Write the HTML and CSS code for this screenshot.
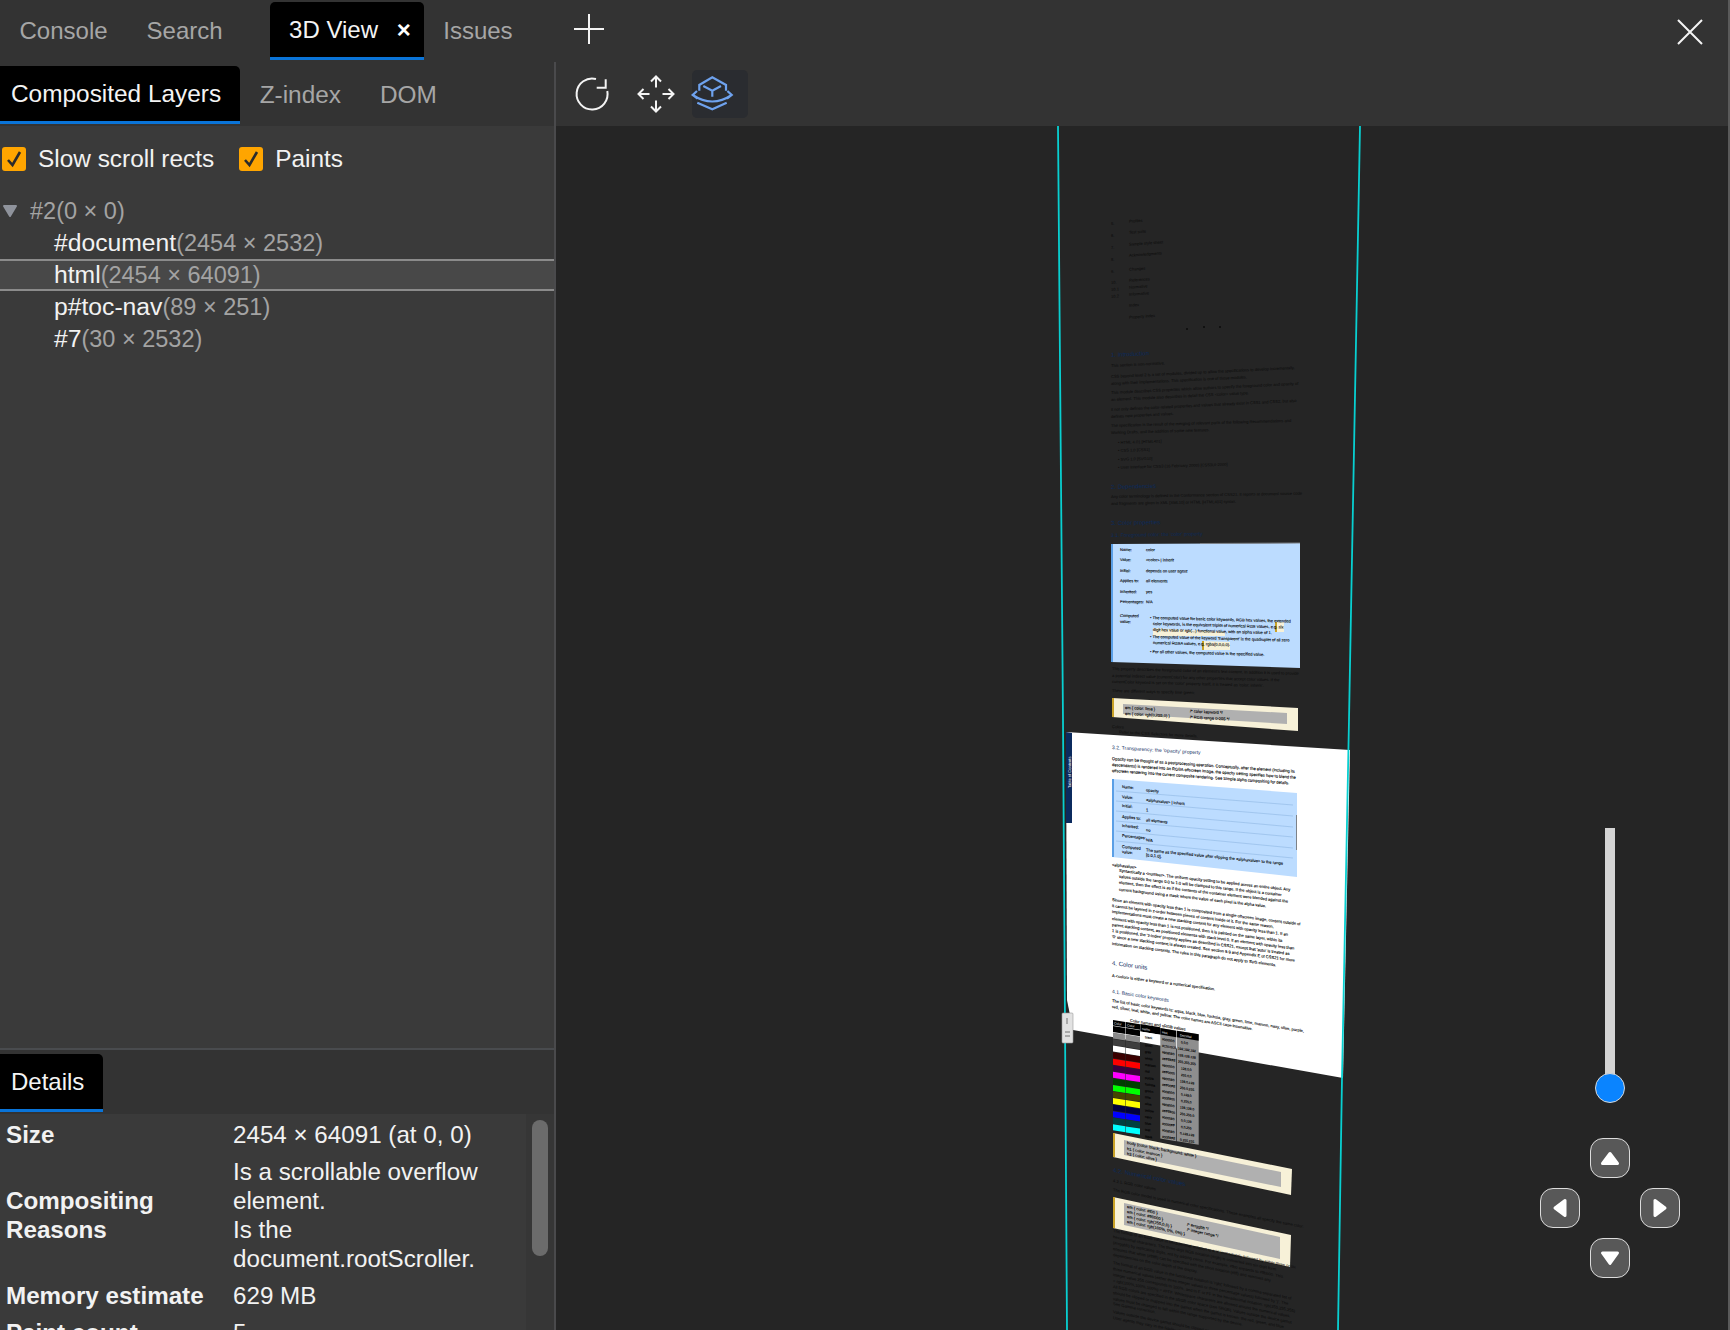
FILE: index.html

```html
<!DOCTYPE html>
<html lang="en">
<head>
  <meta charset="UTF-8">
  <title>3D View</title>
  <link rel="stylesheet" href="styles.css">
</head>
<body>
  <div class="tabbar">
    <div class="tab">Console</div>
    <div class="tab">Search</div>
    <div class="tab tab-active tab-3d">3D View <span class="tab-x">&times;</span></div>
    <div class="tab">Issues</div>
    <svg class="plus" width="32" height="32" viewBox="0 0 32 32"><path d="M16 1V31M1 16H31"/></svg>
    <svg class="close" width="28" height="28" viewBox="0 0 28 28"><path d="M2 2L26 26M26 2L2 26"/></svg>
  </div>

  <div class="main">
    <div class="side">
      <div class="subtabs">
        <div class="tab tab-active tab-first">Composited Layers</div>
        <div class="tab">Z-index</div>
        <div class="tab">DOM</div>
      </div>

      <div class="checks">
        <label class="check"><span class="box"><svg width="24" height="24" viewBox="0 0 24 24"><path d="M6 13L10.5 18L18 5"/></svg></span>Slow scroll rects</label>
        <label class="check"><span class="box"><svg width="24" height="24" viewBox="0 0 24 24"><path d="M6 13L10.5 18L18 5"/></svg></span>Paints</label>
      </div>

      <div class="tree">
        <div class="row row-root">
          <svg class="caret" width="18" height="14" viewBox="0 0 18 14"><path d="M3 2H15L9 12Z"/></svg>
          <span class="dim">#2(0 &times; 0)</span>
        </div>
        <div class="row row-child">#document<span class="dim">(2454 &times; 2532)</span></div>
        <div class="row row-child row-selected">html<span class="dim">(2454 &times; 64091)</span></div>
        <div class="row row-child">p#toc-nav<span class="dim">(89 &times; 251)</span></div>
        <div class="row row-child">#7<span class="dim">(30 &times; 2532)</span></div>
      </div>

      <div class="details-tabs">
        <div class="tab tab-active tab-first">Details</div>
      </div>
      <div class="details">
        <table class="info">
          <tr><th>Size</th><td>2454 &times; 64091 (at 0, 0)</td></tr>
          <tr>
            <th>Compositing Reasons</th>
            <td><div>Is a scrollable overflow element.</div><div>Is the document.rootScroller.</div></td>
          </tr>
          <tr><th>Memory estimate</th><td>629 MB</td></tr>
          <tr><th>Paint count</th><td>5</td></tr>
        </table>
        <div class="scroll"><div class="thumb"></div></div>
      </div>
    </div>

    <div class="view">
      <div class="toolbar">
        <svg class="tool" width="40" height="40" viewBox="0 0 40 40"><path d="M24 5A15.5 15.5 0 1 0 35.3 17M33.7 5.3V13.7H24.7"/></svg>
        <svg class="tool tool-move" width="40" height="40" viewBox="0 0 40 40"><path d="M20 2.5V13.5M15 7.5L20 2.5L25 7.5M20 26.5V37.5M15 32.5L20 37.5L25 32.5M2.5 20H13.5M7.5 15L2.5 20L7.5 25M26.5 20H37.5M32.5 15L37.5 20L32.5 25"/></svg>
        <span class="tool-on">
          <svg class="tool tool-blue" width="44" height="44" viewBox="0 0 44 44"><path d="M9.3 18.7V13L22.3 5.3L36 13V18.7M13.3 14L22.3 18.7L31 14M22.3 18.7V24.7M2.7 23Q22.3 36 41.7 23M7 19L2.7 23L7.5 26.5M37.4 19L41.7 23L37 26.5M7.3 30.7L22.3 37.3L36.7 30.7"/></svg>
        </span>
      </div>

      <div class="canvas">
        <svg class="scene" width="1172" height="1204" viewBox="556 126 1172 1204">
          <!-- contents -->
          <g class="mini dark" transform="translate(1111 0) skewY(-4)">
            <text y="225">5.</text><text x="18" y="224">Profiles</text>
            <text y="237">6.</text><text x="18" y="235">Test suite</text>
            <text y="249">7.</text><text x="18" y="247">Sample style sheet</text>
            <text y="261">8.</text><text x="18" y="258">Acknowledgments</text>
            <text y="273">9.</text><text x="18" y="272">Changes</text>
            <text y="284">10.</text><text x="18" y="283">References</text>
            <text y="291">10.1</text><text x="18" y="290">Normative</text>
            <text y="298">10.2</text><text x="18" y="297">Informative</text>
            <text x="18" y="308">Index</text>
            <text x="18" y="320">Property index</text>
          </g>
          <circle class="dot" cx="1187" cy="329" r="1"/>
          <circle class="dot" cx="1204" cy="327" r="1"/>
          <circle class="dot" cx="1220" cy="327" r="1"/>

          <!-- intro -->
          <g class="mini dark" transform="translate(1111 0) skewY(-2.8)">
            <text class="head" y="357">1. Introduction</text>
            <text y="367">This section is non-normative.</text>
            <text y="378">CSS beyond level 2 is a set of modules, divided up to allow the specifications to develop incrementally,</text>
            <text y="385">along with their implementations. This specification is one of those modules.</text>
            <text y="394">This module describes CSS properties which allow authors to specify the foreground color and opacity of</text>
            <text y="401">an element. This module also describes in detail the CSS &lt;color&gt; value type.</text>
            <text y="411">It not only defines the color-related properties and values that already exist in CSS1 and CSS2, but also</text>
            <text y="418">defines new properties and values.</text>
          </g>
          <g class="mini dark" transform="translate(1111 0) skewY(-1.6)">
            <text y="427">The specification is the result of the merging of relevant parts of the following Recommendations and</text>
            <text y="434">Working Drafts, and the addition of some new features.</text>
            <text x="7" y="444">&#8226; HTML 4.01 [HTML401]</text>
            <text x="7" y="452">&#8226; CSS 1.0 [CSS1]</text>
            <text x="7" y="461">&#8226; SVG 1.0 [SVG10]</text>
            <text x="7" y="469">&#8226; User Interface for CSS3 (16 February 2000) [CSS3UI-2000]</text>
            <text class="head" y="489">2. Dependencies</text>
          </g>
          <g class="mini dark" transform="translate(1111 0) skewY(-1)">
            <text y="498">Any color terminology is defined in the Conformance section of CSS21. It reports at document source code</text>
            <text y="505">and fragments are given in XML [XML10] or HTML [HTML401] syntax.</text>
            <text class="head" y="525">3. Color properties</text>
            <text class="lnk" y="537">3.1. Foreground color: the 'color' property</text>
          </g>

          <!-- color property box -->
          <polygon class="blue" points="1111,544 1300,543 1300,668 1111,662"/>
          <polygon class="stripe" points="1111,544 1113,544 1113,662 1111,662"/>
          <path class="shade" d="M1200 543.5L1300 543"/>
          <g class="mini black" transform="translate(1111 0) skewY(0.5)">
            <text x="9" y="551">Name:</text><text x="35" y="551">color</text>
            <text x="9" y="561">Value:</text><text x="35" y="561">&lt;color&gt; | inherit</text>
            <text x="9" y="572">Initial:</text><text x="35" y="572">depends on user agent</text>
            <text x="9" y="582">Applies to:</text><text x="35" y="582">all elements</text>
            <text x="9" y="593">Inherited:</text><text x="35" y="593">yes</text>
            <text x="9" y="603">Percentages:</text><text x="35" y="603">N/A</text>
            <text x="9" y="617">Computed</text><text x="9" y="623">value:</text>
          </g>
          <polygon class="cream" points="1275,622 1284,622 1284,632 1275,632"/>
          <polygon class="gold" points="1275,622 1277,622 1277,632 1275,632"/>
          <polygon class="cream" points="1153,628 1225,632 1225,636 1153,636"/>
          <polygon class="cream" points="1202,641 1230,642 1230,650 1202,650"/>
          <polygon class="gold" points="1202,641 1204,641 1204,650 1202,650"/>
          <g class="mini black" transform="translate(1111 0) skewY(1.5)">
            <text x="39" y="618">&#8226; The computed value for basic color keywords, RGB hex values, the extended</text>
            <text x="42" y="624">color keywords, is the equivalent triplet of numerical RGB values, e.g. six</text>
            <text x="42" y="630">digit hex value or rgb(...) functional value, with an alpha value of 1.</text>
            <text x="39" y="637">&#8226; The computed value of the keyword 'transparent' is the quadruplet of all zero</text>
            <text x="42" y="643">numerical RGBA values, e.g. rgba(0,0,0,0).</text>
            <text x="39" y="652">&#8226; For all other values, the computed value is the specified value.</text>
          </g>

          <g class="mini dark" transform="translate(1112 0) skewY(1.5)">
            <text y="670">This property describes the foreground color of an element's text content. In addition it is used to provide</text>
            <text y="677">a potential indirect value (currentColor) for any other properties that accept color values. If the</text>
            <text y="683">currentColor keyword is set on the 'color' property itself, it is treated as 'color: inherit'.</text>
            <text y="692">There are different ways to specify lime green:</text>
          </g>

          <polygon class="cream" points="1112,698 1298,708 1298,731 1112,717"/>
          <polygon class="gold" points="1112,698 1114,698 1114,717 1112,717"/>
          <polygon class="code" points="1123,704 1287,713 1287,724 1123,714"/>
          <g class="mini black" transform="translate(1125 0) skewY(3)">
            <text y="709">em { color: lime }</text><text x="65" y="709">/* color keyword */</text>
            <text y="715">em { color: rgb(0,255,0) }</text><text x="65" y="715">/* RGB range 0-255 */</text>
          </g>
          <g class="mini dark" transform="translate(1112 0) skewY(3)">
            <text y="728">Colors</text>
            <text x="7" y="733">Refer to the CSS Selectors for more details.</text>
          </g>

          <!-- layer that is lifted off the page -->
          <polygon class="sheet" points="1066,732 1350,750 1343,1078 1073,1030 1067,1000"/>
          <polygon class="navy" points="1066,732 1072,733 1072,823 1066,823"/>
          <text class="mini white" transform="translate(1070.5 788) rotate(-90)">Table of Contents</text>

          <text class="mini lnk" transform="translate(1112 749) skewY(3.4)">3.2. Transparency: the 'opacity' property</text>
          <g class="mini black" transform="translate(1112 0) skewY(4)">
            <text y="760">Opacity can be thought of as a postprocessing operation. Conceptually, after the element (including its</text>
            <text y="766">descendants) is rendered into an RGBA offscreen image, the opacity setting specifies how to blend the</text>
            <text y="772">offscreen rendering into the current composite rendering. See Simple alpha compositing for details.</text>
          </g>

          <polygon class="blue" points="1112,779 1297,793 1297,877 1112,857"/>
          <polygon class="stripe" points="1112,779 1114,779 1114,857 1112,857"/>
          <path class="rule" d="M1116 791L1293 805M1116 801L1293 816M1116 811L1293 827M1116 821L1293 837M1116 831L1293 848M1116 841L1293 858"/>
          <path class="shade" d="M1296.5 815V850"/>
          <g class="mini black" transform="translate(1112 0) skewY(5.6)">
            <text x="10" y="787">Name:</text><text x="34" y="788">opacity</text>
            <text x="10" y="797">Value:</text><text x="34" y="798">&lt;alphavalue&gt; | inherit</text>
            <text x="10" y="806">Initial:</text><text x="34" y="808">1</text>
            <text x="10" y="817">Applies to:</text><text x="34" y="818">all elements</text>
            <text x="10" y="826">Inherited:</text><text x="34" y="828">no</text>
            <text x="10" y="836">Percentages:</text><text x="34" y="838">N/A</text>
            <text x="10" y="847">Computed</text><text x="10" y="852">value:</text>
            <text x="34" y="848">The same as the specified value after clipping the &lt;alphavalue&gt; to the range</text>
            <text x="34" y="853">[0.0,1.0].</text>
          </g>

          <g class="mini black" transform="translate(1112 0) skewY(6.4)">
            <text y="866">&lt;alphavalue&gt;</text>
            <text x="7" y="871">Syntactically a &lt;number&gt;. The uniform opacity setting to be applied across an entire object. Any</text>
            <text x="7" y="877">values outside the range 0.0 to 1.0 will be clamped to this range. If the object is a container</text>
            <text x="7" y="883">element, then the effect is as if the contents of the container element were blended against the</text>
            <text x="7" y="890">current background using a mask where the value of each pixel is the alpha value.</text>
          </g>
          <g class="mini black" transform="translate(1112 0) skewY(7.4)">
            <text y="901">Since an element with opacity less than 1 is composited from a single offscreen image, content outside of</text>
            <text y="907">it cannot be layered in z-order between pieces of content inside of it. For the same reason,</text>
            <text y="913">implementations must create a new stacking context for any element with opacity less than 1. If an</text>
            <text y="920">element with opacity less than 1 is not positioned, then it is painted on the same layer, within its</text>
            <text y="926">parent stacking context, as positioned elements with stack level 0. If an element with opacity less than</text>
            <text y="932">1 is positioned, the 'z-index' property applies as described in CSS21, except that 'auto' is treated as</text>
            <text y="938">'0' since a new stacking context is always created. See section 9.9 and Appendix E of CSS21 for more</text>
            <text y="945">information on stacking contexts. The rules in this paragraph do not apply to SVG elements.</text>
            <text class="head" y="965">4. Color units</text>
            <text y="977">A &lt;color&gt; is either a keyword or a numerical specification.</text>
          </g>
          <g class="mini black" transform="translate(1112 0) skewY(9)">
            <text class="lnk" y="993">4.1. Basic color keywords</text>
            <text y="1002">The list of basic color keywords is: aqua, black, blue, fuchsia, gray, green, lime, maroon, navy, olive, purple,</text>
            <text y="1008">red, silver, teal, white, and yellow. The color names are ASCII case-insensitive.</text>
            <text x="18" y="1019">Color names and sRGB values</text>
          </g>

          <!-- outline of the page -->
          <path class="edge" d="M1058 126L1063 720L1067 1330"/>
          <path class="edge" d="M1360 126L1349 720L1342 1078L1338 1330"/>

          <!-- scrollbar handle -->
          <rect class="grip" x="1062" y="1013" width="11" height="30" rx="1"/>
          <path class="grip-mark" d="M1067 1018V1024M1065 1032H1070M1065 1036H1070"/>

          <!-- basic colors -->
          <g transform="translate(1113 1019) skewY(9.1)">
            <defs>
              <g id="swatches">
                <rect y="7" width="12.5" height="6" fill="#000"/>
                <rect y="13.5" width="12.5" height="6" fill="#8a8a8a"/>
                <rect y="20" width="12.5" height="6" fill="#3d3d3d"/>
                <rect y="26.6" width="12.5" height="6" fill="#fff"/>
                <rect y="33.2" width="12.5" height="6" fill="#3a0000"/>
                <rect y="39.7" width="12.5" height="6" fill="#f00"/>
                <rect y="46.3" width="12.5" height="6" fill="#3a003f"/>
                <rect y="52.8" width="12.5" height="6" fill="#f0f"/>
                <rect y="59.4" width="12.5" height="6" fill="#003f00"/>
                <rect y="66" width="12.5" height="6" fill="#0f0"/>
                <rect y="72.5" width="12.5" height="6" fill="#444400"/>
                <rect y="79" width="12.5" height="6" fill="#ff0"/>
                <rect y="85.6" width="12.5" height="6" fill="#00003f"/>
                <rect y="92.2" width="12.5" height="6" fill="#00f"/>
                <rect y="98.7" width="12.5" height="6" fill="#004040"/>
                <rect y="105.3" width="12.5" height="6" fill="#0ff"/>
              </g>
            </defs>
            <rect x="0" y="1" width="12.5" height="5.5" fill="#000"/>
            <rect x="13" y="1" width="14" height="5.5" fill="#000"/>
            <use href="#swatches"/>
            <use href="#swatches" transform="translate(13 0) scale(1.12 1)"/>
            <rect x="27.3" y="0.6" width="20" height="7.6" fill="#000"/>
            <rect x="27.3" y="8.2" width="20" height="9" fill="#fff"/>
            <rect x="47.3" y="1.5" width="16" height="110.5" fill="#8e8e8e"/>
            <rect x="64" y="1.5" width="21.7" height="110.5" fill="#8e8e8e"/>
            <rect x="47.3" y="1.5" width="16" height="6.5" fill="#000"/>
            <rect x="64" y="1.5" width="21.7" height="6.5" fill="#000"/>
            <g class="tiny white">
              <text x="1" y="5">Color</text><text x="14" y="5">Color</text>
              <text x="29" y="6">name</text><text x="49" y="6.5">Hex</text><text x="67" y="6.5">Decimal</text>
            </g>
            <g class="tiny black">
              <text x="32" y="14">black</text><text x="49" y="13.5">#000000</text><text x="68" y="13.5">0,0,0</text>
              <text x="32" y="22">silver</text><text x="49" y="20">#C0C0C0</text><text x="65" y="20">192,192,192</text>
              <text x="32" y="28.5">gray</text><text x="49" y="26.5">#808080</text><text x="65" y="26.5">128,128,128</text>
              <text x="32" y="35">white</text><text x="49" y="33">#FFFFFF</text><text x="65" y="33">255,255,255</text>
              <text x="32" y="41.5">maroon</text><text x="49" y="39.5">#800000</text><text x="68" y="39.5">128,0,0</text>
              <text x="32" y="48">red</text><text x="49" y="46">#FF0000</text><text x="68" y="46">255,0,0</text>
              <text x="32" y="54.5">purple</text><text x="49" y="52.5">#800080</text><text x="67" y="52.5">128,0,128</text>
              <text x="32" y="61">fuchsia</text><text x="49" y="59">#FF00FF</text><text x="67" y="59">255,0,255</text>
              <text x="32" y="67.5">green</text><text x="49" y="65.5">#008000</text><text x="68" y="65.5">0,128,0</text>
              <text x="32" y="74">lime</text><text x="49" y="72">#00FF00</text><text x="68" y="72">0,255,0</text>
              <text x="32" y="80.5">olive</text><text x="49" y="78.5">#808000</text><text x="67" y="78.5">128,128,0</text>
              <text x="32" y="87">yellow</text><text x="49" y="85">#FFFF00</text><text x="67" y="85">255,255,0</text>
              <text x="32" y="93.5">navy</text><text x="49" y="91.5">#000080</text><text x="68" y="91.5">0,0,128</text>
              <text x="32" y="100">blue</text><text x="49" y="98">#0000FF</text><text x="68" y="98">0,0,255</text>
              <text x="32" y="106.5">teal</text><text x="49" y="104.5">#008080</text><text x="67" y="104.5">0,128,128</text>
              <text x="32" y="113">aqua</text><text x="49" y="111">#00FFFF</text><text x="67" y="111">0,255,255</text>
            </g>
          </g>

          <polygon class="cream" points="1113,1133 1292,1169 1291,1195 1113,1157"/>
          <polygon class="gold" points="1113,1133 1115,1133 1115,1157 1113,1157"/>
          <polygon class="code" points="1124,1140 1281,1172 1281,1187 1124,1155"/>
          <g class="mini black" transform="translate(1127 0) skewY(11)">
            <text y="1144">body {color: black; background: white }</text>
            <text y="1150">h1 { color: maroon }</text>
            <text y="1155">h2 { color: olive }</text>
          </g>

          <g class="mini dark" transform="translate(1113 0) skewY(11)">
            <text class="head" y="1172">4.2. Numerical color values</text>
            <text y="1182">4.2.1. RGB color values</text>
            <text y="1191">The RGB color model is used in numerical color specifications. These examples all specify the same color:</text>
          </g>

          <polygon class="cream" points="1113,1197 1291,1235 1290,1267 1113,1228"/>
          <polygon class="gold" points="1113,1197 1115,1197 1115,1228 1113,1228"/>
          <polygon class="code" points="1124,1203 1280,1237 1280,1259 1124,1225"/>
          <g class="mini black" transform="translate(1127 0) skewY(12)">
            <text y="1208">em { color: #f00 }</text>
            <text y="1213">em { color: #ff0000 }</text><text x="60" y="1213">/* #rrggbb */</text>
            <text y="1218">em { color: rgb(255,0,0) }</text><text x="60" y="1218">/* integer range */</text>
            <text y="1223">em { color: rgb(100%, 0%, 0%) }</text>
          </g>

          <g class="mini dark" transform="translate(1113 0) skewY(11.3)">
            <text y="1232">The format of an RGB value in hexadecimal notation is a '#' immediately followed by either three or six</text>
            <text y="1238">hexadecimal characters. The three-digit RGB notation (#rgb) is converted into six-digit form</text>
            <text y="1244">(#rrggbb) by replicating digits, not by adding zeros. For example, #fb0 expands to #ffbb00. This</text>
            <text y="1250">ensures that white (#ffffff) can be specified with the short notation (#fff) and removes any</text>
            <text y="1256">dependencies on the color depth of the display.</text>
            <text y="1264">The format of an RGB value in the functional notation is 'rgb(' followed by a comma-separated list of</text>
            <text y="1270">three numerical values (either three integer values or three percentage values) followed by ')'. The</text>
            <text y="1276">integer value 255 corresponds to 100%, and to F or FF in the hexadecimal notation: rgb(255,255,255)</text>
            <text y="1282">= rgb(100%,100%,100%) = #FFF. Whitespace characters are allowed around the numerical values.</text>
            <text y="1288">All RGB colors are specified in the sRGB color space (see SRGB). Values outside the device gamut</text>
            <text y="1294">should be clipped or mapped into the gamut when the gamut is known: the red, green, and blue</text>
            <text y="1300">values must be changed to fall within the range supported by the device.</text>
            <text y="1305">See Gamma correction.</text>
            <text y="1313">Values outside the device gamut should be clipped or mapped.</text>
            <text y="1319">User agents may vary in the fidelity of these colors.</text>
          </g>
        </svg>

        <div class="zoom">
          <div class="zoom-track"></div>
          <div class="zoom-knob"></div>
        </div>
        <div class="pad">
          <button class="pad-btn pad-up"><svg width="22" height="16" viewBox="0 0 22 16"><path d="M11 3.5L18.5 13.5H3.5Z"/></svg></button>
          <button class="pad-btn pad-left"><svg width="16" height="22" viewBox="0 0 16 22"><path d="M3 11L13 3.5V18.5Z"/></svg></button>
          <button class="pad-btn pad-right"><svg width="16" height="22" viewBox="0 0 16 22"><path d="M13 11L3 3.5V18.5Z"/></svg></button>
          <button class="pad-btn pad-down"><svg width="22" height="16" viewBox="0 0 22 16"><path d="M11 13.5L18.5 3H3.5Z"/></svg></button>
        </div>
      </div>
    </div>
  </div>
</body>
</html>
```

FILE: styles.css

```css
* { box-sizing: border-box; }
html, body { margin: 0; height: 100%; }
body { width: 1730px; height: 1330px; overflow: hidden; display: flex; flex-direction: column; background: #333; color: #f2f2f2; font: 24px "Liberation Sans", Arial, sans-serif; border-right: 2px solid #5a5a5a; }

/* tabs */
.tabbar { height: 62px; padding-top: 2px; display: flex; align-items: stretch; background: #333; flex: none; }
.tab { padding: 0 19.5px; height: 58px; display: flex; align-items: center; color: #a6a6a6; white-space: pre; }
.tab-active { background: #000; color: #f4f4f4; border-bottom: 3px solid #0a74d8; border-radius: 5px 5px 0 0; }
.tab-3d { margin-left: 28px; padding: 0 13px 0 19px; }
.tab-x { margin-left: 12px; font-weight: bold; color: #fff; }
.tab-first { padding: 0 19px 0 11px; border-top-left-radius: 0; }
.plus { margin: 11px 0 0 41px; }
.plus path, .close path { fill: none; stroke: #f4f4f4; stroke-width: 2; }
.close { margin: 16px 24px 0 auto; }

/* left panel */
.main { flex: 1; display: flex; min-height: 0; }
.side { width: 556px; flex: none; display: flex; flex-direction: column; background: #3a3a3a; border-right: 2px solid #4a4a4c; }
.subtabs { height: 64px; padding-top: 4px; flex: none; display: flex; background: #333; font-size: 24.4px; }
.checks { display: flex; gap: 25px; padding: 19px 0 0 2px; font-size: 24.4px; }
.check { display: flex; align-items: center; gap: 12px; color: #f2f2f2; }
.box { width: 24px; height: 24px; background: #ffa500; border-radius: 3px; display: block; }
.box svg { display: block; }
.box path { fill: none; stroke: #2b2b2b; stroke-width: 2.6; }
.tree { flex: 1; padding-top: 22px; }
.row { height: 32px; display: flex; align-items: center; white-space: pre; font-size: 24.7px; }
.row-root { padding-left: 1px; color: #a6a6a6; }
.row-child { padding-left: 54px; }
.row-selected { background: #484848; border-top: 2px solid #8b8b8b; border-bottom: 2px solid #8b8b8b; }
.caret { margin-right: 11px; }
.caret path { fill: #8f939c; stroke: #8f939c; stroke-width: 2; stroke-linejoin: round; }
.dim { color: #a3a3a3; font-size: 23.5px; }

/* details */
.details-tabs { height: 66px; padding-top: 4px; flex: none; display: flex; background: #333; border-top: 2px solid #494b4e; }
.details { height: 216px; flex: none; display: flex; overflow: hidden; }
.info { width: 526px; flex: none; margin-top: 2px; border-collapse: collapse; align-self: flex-start; font-size: 24.2px; }
.info th, .info td { padding: 4px 6px; line-height: 29px; font-weight: normal; text-align: left; }
.info th { width: 227px; font-weight: bold; font-size: 24.2px; color: #f2f2f2; }
.info td { padding-right: 30px; }
.scroll { flex: 1; padding: 6px 6px; background: #363636; }
.thumb { width: 16px; height: 136px; border-radius: 8px; background: #6b6b6b; }

/* right side */
.view { flex: 1; display: flex; flex-direction: column; min-width: 0; }
.toolbar { height: 64px; flex: none; padding-left: 16px; display: flex; align-items: center; background: #333; }
.tool { display: block; }
.tool path { fill: none; stroke: #f4f4f4; stroke-width: 2; }
.tool-move { margin-left: 24px; }
.tool-on { width: 56px; height: 48px; margin: 0 0 0 16px; display: flex; align-items: center; background: #2a2c30; border-radius: 5px; }
.tool-blue { flex: none; margin-left: -2px; }
.tool-blue path { stroke: #6ea2ee; stroke-width: 2.2; }

/* 3d scene */
.canvas { flex: 1; position: relative; background: #252525; overflow: hidden; }
.scene { display: block; }
.edge { fill: none; stroke: #08cfd0; stroke-width: 1.8; }
.mini text, text.mini { font-family: "Liberation Sans", Arial, sans-serif; font-size: 4.05px; text-rendering: geometricPrecision; }
.tiny text { font-family: "Liberation Sans", Arial, sans-serif; font-size: 3.2px; text-rendering: geometricPrecision; }
.dark text { fill: #0b0b0b; }
.black text { fill: #000; stroke: #000; stroke-width: 0.1; }
.white text, text.white { fill: #fff; }
.mini text.head { font-size: 6px; fill: #0b2a5c; stroke: none; }
.mini text.lnk, text.mini.lnk { font-size: 5px; fill: #0b2a5c; stroke: none; }
.dot { fill: #0b0b0b; }
.blue { fill: #bcdcff; }
.stripe { fill: #5a9fe6; }
.rule { fill: none; stroke: #8fb7e2; stroke-width: 0.6; }
.shade { fill: none; stroke: #7d8288; stroke-width: 1; }
.cream { fill: #f7f1d8; }
.gold { fill: #c9a227; }
.code { fill: #b0b0b0; }
.sheet { fill: #fff; }
.navy { fill: #0b2a5e; }
.grip { fill: #e2e2e2; stroke: #9a9a9a; stroke-width: 0.6; }
.grip-mark { fill: none; stroke: #555; stroke-width: 0.8; }

/* camera controls */
.zoom { position: absolute; left: 1034px; top: 702px; width: 40px; height: 276px; }
.zoom-track { width: 10px; height: 250px; margin: 0 auto; background: #d4d4d4; }
.zoom-knob { position: absolute; left: 5px; bottom: 1px; width: 30px; height: 30px; border-radius: 50%; background: #0a84ff; border: 1px solid #d8d8d8; }
.pad { position: absolute; left: 984px; top: 1012px; width: 140px; height: 140px; display: grid; grid-template-columns: repeat(3, 40px); grid-template-rows: repeat(3, 40px); gap: 10px; }
.pad-btn { width: 40px; height: 40px; padding: 0; display: flex; align-items: center; justify-content: center; background: #585858; border: 1px solid #dcdcdc; border-radius: 13px; }
.pad-btn path { fill: #fff; stroke: #fff; stroke-width: 3; stroke-linejoin: round; }
.pad-up { grid-area: 1 / 2; }
.pad-left { grid-area: 2 / 1; }
.pad-right { grid-area: 2 / 3; }
.pad-down { grid-area: 3 / 2; }
```
